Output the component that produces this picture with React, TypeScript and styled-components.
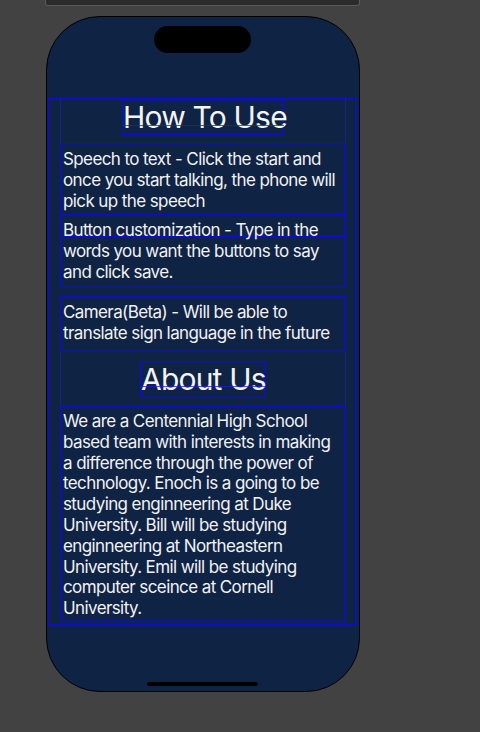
import React from "react";
import styled, { createGlobalStyle } from "styled-components";

const Global = createGlobalStyle`
  html, body { margin: 0; padding: 0; background: #424242; }
  body { width: 480px; height: 732px; overflow: hidden; font-family: Inter, "Liberation Sans", sans-serif; }
`;

const LINE = "#0d0dcc";
const LINE_SOFT = "rgba(13, 13, 204, 0.45)";

const Stage = styled.div`
  display: flex;
  flex-direction: column;
  align-items: flex-start;
  padding-left: 45px;
`;

const TopBar = styled.div`
  width: 315px;
  height: 6px;
  box-sizing: border-box;
  background: #2b2b2b;
  border: 1px solid #5a5a5a;
  border-top: none;
  border-radius: 0 0 3px 3px;
`;

const Phone = styled.div`
  position: relative;
  margin-top: 10px;
  margin-left: 1px;
  width: 314px;
  height: 676px;
  box-sizing: border-box;
  border: 1px solid #000;
  border-radius: 54px;
  background: #0f2344;
  padding: 81px 2px 0 1px;
  display: flex;
  flex-direction: column;
`;

const Notch = styled.div`
  position: absolute;
  top: 9px;
  left: 107px;
  width: 97px;
  height: 27px;
  border-radius: 14px;
  background: #000;
`;

const HomeBar = styled.div`
  position: absolute;
  bottom: 5px;
  left: 100px;
  width: 111px;
  height: 4px;
  border-radius: 2px;
  background: #000;
`;

const Frame = styled.div`
  box-sizing: border-box;
  border: 1px solid ${LINE};
  box-shadow: inset 0 0 0 1px ${LINE_SOFT};
  padding: 0 10px 2px 11px;
  display: flex;
  flex-direction: column;
`;

const HeadingRow = styled.div<{ $h: number; $top: number }>`
  box-sizing: border-box;
  height: ${(p) => p.$h}px;
  border-left: 1px solid rgba(30, 40, 170, 0.55);
  border-right: 1px solid rgba(30, 40, 170, 0.55);
  display: flex;
  justify-content: center;
  align-items: flex-start;
  padding-top: ${(p) => p.$top}px;
`;

const Title = styled.h1<{ $h: number; $w: number; $line: number }>`
  position: relative;
  margin: 0;
  box-sizing: border-box;
  width: ${(p) => p.$w}px;
  height: ${(p) => p.$h}px;
  border: 1px solid ${LINE};
  box-shadow: inset 0 0 0 1px ${LINE_SOFT};
  padding: 0;
  text-align: center;
  white-space: nowrap;
  font-size: 30px;
  font-weight: 400;
  line-height: ${(p) => p.$h - 2}px;
  color: #f4f4f6;
  letter-spacing: -0.8px;
  &::after {
    content: "";
    position: absolute;
    left: -1px;
    right: -1px;
    bottom: ${(p) => p.$line}px;
    height: 1px;
    background: rgba(30, 30, 220, 0.75);
  }
`;

const Box = styled.p<{ $h: number; $mt: number; $pt: number }>`
  margin: ${(p) => p.$mt}px 0 0 0;
  box-sizing: border-box;
  height: ${(p) => p.$h}px;
  border: 1px solid ${LINE};
  box-shadow: inset 0 0 0 1px ${LINE_SOFT};
  padding: ${(p) => p.$pt}px 4px 0 2px;
  font-size: 17px;
  line-height: 20.8px;
  letter-spacing: -0.6px;
  color: #f2f2f4;
`;

export default function App() {
  return (
    <>
      <Global />
      <Stage>
        <TopBar />
        <Phone>
          <Notch />
          <Frame>
            <HeadingRow $h={44} $top={0}>
              <Title $h={36} $w={162} $line={8}>How To Use</Title>
            </HeadingRow>
            <Box $h={94} $mt={0} $pt={5}>
              Speech to text - Click the start and once you start talking, the phone will pick up the speech
            </Box>
            <Box $h={74} $mt={-23} $pt={5}>
              Button customization - Type in the words you want the buttons to say and click save.
            </Box>
            <Box $h={56} $mt={8} $pt={5}>
              Camera(Beta) - Will be able to translate sign language in the future
            </Box>
            <HeadingRow $h={54} $top={9}>
              <Title $h={37} $w={126} $line={10}>About Us</Title>
            </HeadingRow>
            <Box $h={216} $mt={0} $pt={4}>
              We are a Centennial High School based team with interests in making a difference through the power of
              technology. Enoch is a going to be studying enginneering at Duke University. Bill will be studying
              enginneering at Northeastern University. Emil will be studying computer sceince at Cornell University.
            </Box>
          </Frame>
          <HomeBar />
        </Phone>
      </Stage>
    </>
  );
}
